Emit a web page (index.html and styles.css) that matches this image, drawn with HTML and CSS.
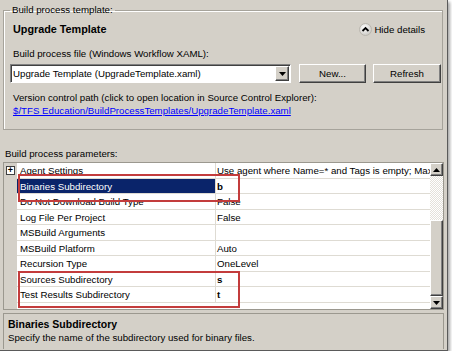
FILE: index.html
```html
<!DOCTYPE html>
<html lang="en">
<head>
  <meta charset="UTF-8" />
  <title>Build process template</title>
  <link rel="stylesheet" href="styles.css">
</head>
<body>
  <div class="window">
    <!-- Template group -->
    <fieldset class="group">
      <legend>Build process template:</legend>
      <div class="title-row">
        <span class="title">Upgrade Template</span>
        <span class="hide">
          <svg class="hide-icon" width="13" height="13" viewBox="0 0 13 13">
            <defs>
              <radialGradient id="g" cx="40%" cy="35%" r="70%">
                <stop offset="0" stop-color="#ffffff"/>
                <stop offset="1" stop-color="#c9c7c2"/>
              </radialGradient>
            </defs>
            <circle cx="6.5" cy="6.5" r="6" fill="url(#g)" stroke="#b9b6ae"/>
            <path d="M3.5 8 L6.5 5 L9.5 8" fill="none" stroke="#000" stroke-width="1.8"/>
          </svg>Hide details
        </span>
      </div>
      <div class="label">Build process file (Windows Workflow XAML):</div>
      <div class="file-row">
        <div class="combo">
          <span class="combo-text">Upgrade Template (UpgradeTemplate.xaml)</span>
          <span class="combo-btn"><svg width="7" height="4" viewBox="0 0 7 4"><path d="M0 0 H7 L3.5 4 Z" fill="#000"/></svg></span>
        </div>
        <button class="btn btn-new">New...</button>
        <button class="btn btn-refresh">Refresh</button>
      </div>
      <div class="vc">Version control path (click to open location in Source Control Explorer):</div>
      <a class="vc-link" href="#">$/TFS Education/BuildProcessTemplates/UpgradeTemplate.xaml</a>
    </fieldset>

    <!-- Parameters grid -->
    <div class="params-label">Build process parameters:</div>
    <div class="grid">
      <div class="rows">
        <div class="row">
          <span class="gutter"><span class="plus">+</span></span>
          <span class="name">Agent Settings</span>
          <span class="value">Use agent where Name=* and Tags is empty; Max Wait Time</span>
        </div>
        <div class="row">
          <span class="gutter"></span>
          <span class="name selected">Binaries Subdirectory</span>
          <span class="value bold">b</span>
        </div>
        <div class="row">
          <span class="gutter"></span>
          <span class="name">Do Not Download Build Type</span>
          <span class="value">False</span>
        </div>
        <div class="row">
          <span class="gutter"></span>
          <span class="name">Log File Per Project</span>
          <span class="value">False</span>
        </div>
        <div class="row">
          <span class="gutter"></span>
          <span class="name">MSBuild Arguments</span>
          <span class="value"></span>
        </div>
        <div class="row">
          <span class="gutter"></span>
          <span class="name">MSBuild Platform</span>
          <span class="value">Auto</span>
        </div>
        <div class="row">
          <span class="gutter"></span>
          <span class="name">Recursion Type</span>
          <span class="value">OneLevel</span>
        </div>
        <div class="row">
          <span class="gutter"></span>
          <span class="name">Sources Subdirectory</span>
          <span class="value bold">s</span>
        </div>
        <div class="row">
          <span class="gutter"></span>
          <span class="name">Test Results Subdirectory</span>
          <span class="value bold">t</span>
        </div>
        <div class="row-fill"><span class="gutter"></span></div>
      </div>
      <div class="scrollbar">
        <span class="arrow"><svg width="7" height="4" viewBox="0 0 7 4"><path d="M0 4 H7 L3.5 0 Z" fill="#000"/></svg></span>
        <span class="track"></span>
        <span class="thumb"></span>
        <span class="arrow"><svg width="7" height="4" viewBox="0 0 7 4"><path d="M0 0 H7 L3.5 4 Z" fill="#000"/></svg></span>
      </div>
      <div class="mark mark-top"></div>
      <div class="mark mark-bottom"></div>
    </div>

    <!-- Description -->
    <div class="desc">
      <div class="desc-title">Binaries Subdirectory</div>
      <div class="desc-text">Specify the name of the subdirectory used for binary files.</div>
    </div>
  </div>
</body>
</html>
```

FILE: styles.css
```css
body {
  margin: 0;
  background: #fff;
  font-family: 'Liberation Sans', Arial, sans-serif;
  font-size: 9.7px;
  color: #000;
}

.window {
  width: 447px;
  height: 350px;
  background: #d4d0c8;
  border-right: 1px solid #5a5a5a;
  border-bottom: 1px solid #5a5a5a;
  box-shadow: 2px 2px 3px rgba(0, 0, 0, 0.35);
  overflow: hidden;
}

/* group box */
.group {
  margin: 3px 0 0 3px;
  padding: 0 0 12px 9px;
  width: 429px;
  border: 1px solid #a6a39b;
  box-shadow: inset 1px 1px #fff;
  min-width: 0;
}
.group legend {
  margin-left: -3px;
  padding: 0 2px;
  line-height: 14px;
}

.title-row {
  display: flex;
  align-items: center;
  justify-content: space-between;
  height: 16px;
  margin-top: 4px;
  padding-right: 17px;
}
.title { font-weight: bold; font-size: 10.8px; }
.hide { display: flex; align-items: center; gap: 2px; }
.hide-icon { display: block; }

.label { margin-top: 10px; line-height: 14px; }

.file-row {
  display: flex;
  margin: 3px 0 0 -3px;
  height: 19px;
}
.combo {
  width: 281px;
  box-sizing: border-box;
  background: #fff;
  border: 1px solid;
  border-color: #808080 #fff #fff #808080;
  box-shadow: inset 1px 1px #404040;
  display: flex;
  align-items: center;
  justify-content: space-between;
  padding: 0 1px 0 2px;
}
.combo-text { line-height: 15px; }
.combo-btn {
  width: 14px;
  height: 15px;
  box-sizing: border-box;
  background: #d4d0c8;
  border: 1px solid;
  border-color: #fff #404040 #404040 #fff;
  box-shadow: inset -1px -1px #808080;
  display: flex;
  align-items: center;
  justify-content: center;
}

.btn {
  height: 19px;
  box-sizing: border-box;
  background: #d4d0c8;
  font: inherit;
  color: #000;
  border: 1px solid;
  border-color: #fff #404040 #404040 #fff;
  box-shadow: inset -1px -1px #808080;
  padding: 0;
}
.btn-new { width: 67px; margin-left: 8px; }
.btn-refresh { width: 68px; margin-left: 7px; }

.vc { margin-top: 8px; line-height: 13px; }
.vc-link {
  display: block;
  line-height: 13px;
  color: #0000ff;
  text-decoration: underline;
}

.params-label {
  margin: 17px 0 0 5px;
  line-height: 14px;
}

/* property grid */
.grid {
  position: relative;
  display: flex;
  margin: 1px 0 0 3px;
  width: 441px;
  height: 148px;
  box-sizing: border-box;
  border: 1px solid #9b988f;
  background: #fff;
}
.rows {
  flex: 1;
  min-width: 0;
  display: flex;
  flex-direction: column;
}
.row {
  display: flex;
  height: 15.5px;
  line-height: 15px;
}
.row-fill { flex: 1; display: flex; }
.gutter {
  width: 13px;
  flex: none;
  background: #d4d0c8;
  display: flex;
  align-items: center;
  justify-content: center;
}
.plus {
  width: 9px;
  height: 9px;
  box-sizing: border-box;
  border: 1px solid #404040;
  background: #fff;
  font-size: 9px;
  line-height: 7px;
  text-align: center;
  font-weight: bold;
}
.name {
  width: 199px;
  flex: none;
  box-sizing: border-box;
  padding-left: 3px;
  border-right: 1px solid #dedbd3;
  border-bottom: 1px solid #dedbd3;
  white-space: nowrap;
  overflow: hidden;
}
.name.selected { background: #0a246a; color: #fff; }
.value {
  flex: 1;
  min-width: 0;
  padding-left: 1px;
  border-bottom: 1px solid #dedbd3;
  white-space: nowrap;
  overflow: hidden;
}
.bold { font-weight: bold; }

.scrollbar {
  width: 13px;
  flex: none;
  display: flex;
  flex-direction: column;
  background: #d4d0c8;
}
.arrow {
  height: 13px;
  flex: none;
  box-sizing: border-box;
  background: #d4d0c8;
  border: 1px solid;
  border-color: #fff #404040 #404040 #fff;
  box-shadow: inset -1px -1px #808080;
  display: flex;
  align-items: center;
  justify-content: center;
}
.track {
  height: 44px;
  flex: none;
  background-color: #f1efe9;
  background-image: repeating-conic-gradient(#e4e1da 0 25%, #fff 0 50%);
  background-size: 2px 2px;
}
.thumb {
  flex: 1;
  box-sizing: border-box;
  background: #d4d0c8;
  border: 1px solid;
  border-color: #fff #404040 #404040 #fff;
  box-shadow: inset -1px -1px #808080;
}

/* red annotation boxes */
.mark {
  position: absolute;
  border: 2.5px solid #c33c3c;
  box-sizing: border-box;
}
.mark-top { left: 14px; top: 11px; width: 222px; height: 28px; }
.mark-bottom { left: 14px; top: 108px; width: 222px; height: 37px; }

/* description */
.desc {
  margin: 3px 0 0 3px;
  width: 441px;
  height: 36px;
  box-sizing: border-box;
  border-top: 1px solid #9b988f;
  border-left: 1px solid #9b988f;
  border-right: 1px solid #9b988f;
  padding: 3px 0 0 4px;
}
.desc-title { font-weight: bold; font-size: 10.5px; line-height: 14px; }
.desc-text { line-height: 14px; }
```
